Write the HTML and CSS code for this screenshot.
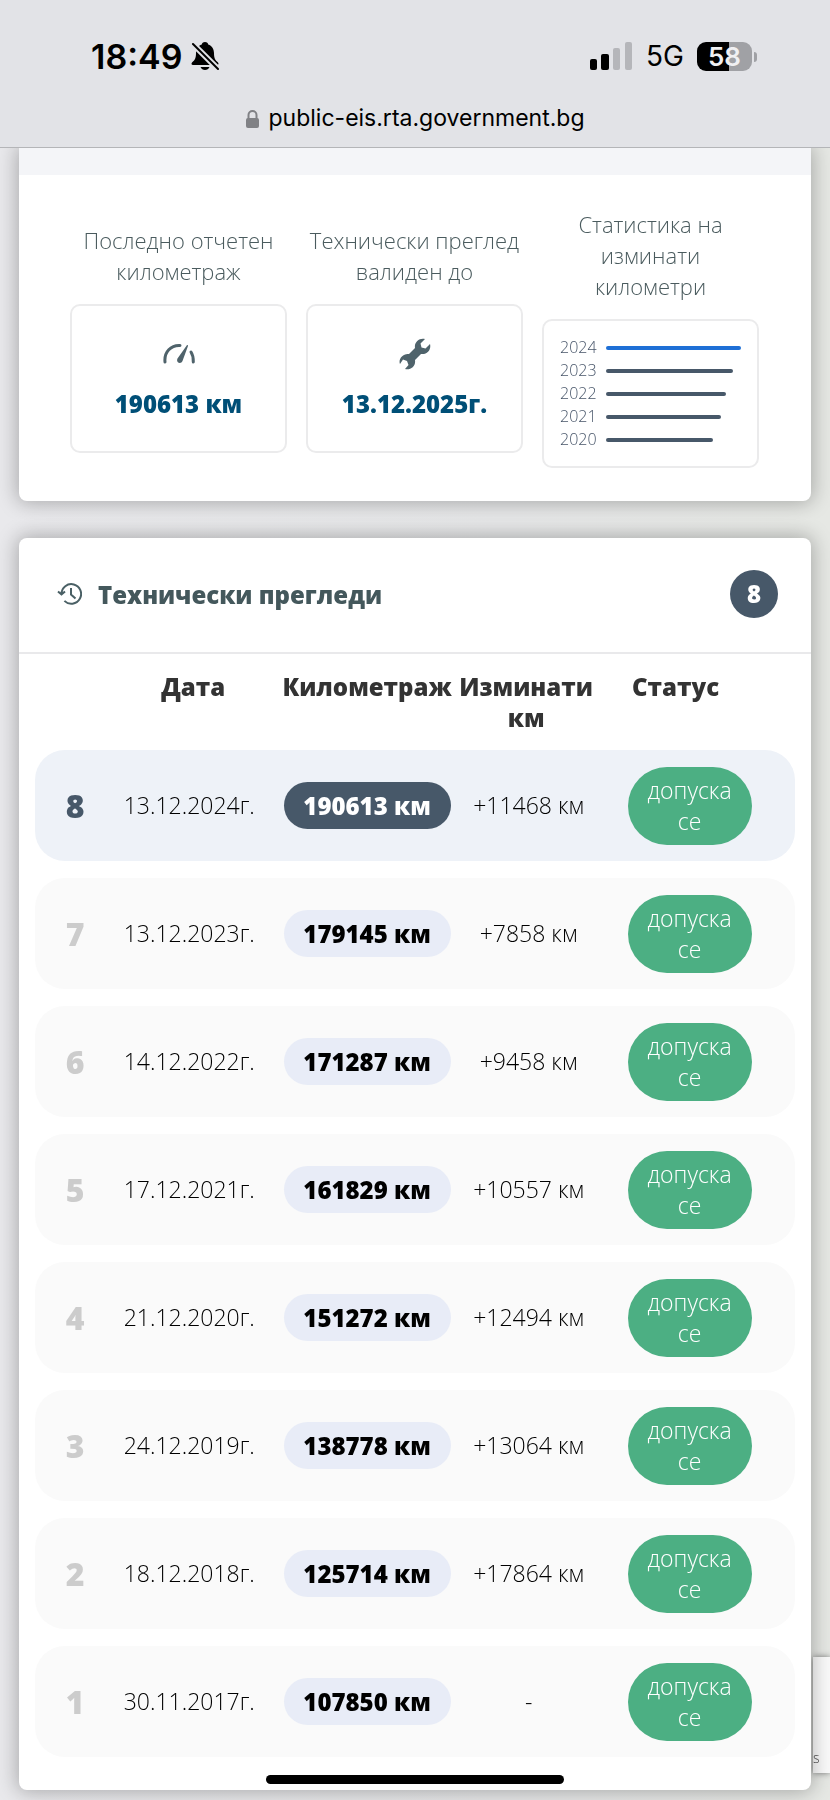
FILE: index.html
```html
<!DOCTYPE html>
<html lang="bg">
<head>
<meta charset="utf-8">
<meta name="viewport" content="width=device-width, initial-scale=1">
<title>Технически прегледи</title>
<link rel="stylesheet" href="styles.css">
</head>
<body>
<header class="browser">
  <div class="status">
    <div class="status-left">
      <span class="clock">18:49</span>
      <svg class="bell" width="28" height="30" viewBox="0 0 28 30" aria-hidden="true">
        <path d="M14 1c2 0 3 1 3.200 2.400C21 4.600 23 8 23 12c0 5 1 7 4 9.500 1 1.200.5 2.500-1 2.500H2c-1.500 0-2-1.300-1-2.500C4 19 5 17 5 12c0-4 2-7.400 5.800-8.600C11 2 12 1 14 1z"/>
        <path d="M9.500 26h9c-.8 2-2.500 3-4.500 3s-3.700-1-4.500-3z"/>
        <path class="bell-gap" d="M2 3l25 25"/>
        <path class="bell-slash" d="M2 3l25 25"/>
      </svg>
    </div>
    <div class="status-right">
      <svg width="42" height="28" viewBox="0 0 42 28" aria-hidden="true">
        <rect x="0" y="17" width="7" height="11" rx="2"/>
        <rect x="11" y="12" width="8" height="16" rx="2"/>
        <rect class="off" x="23" y="6" width="7" height="22" rx="2"/>
        <rect class="off" x="35" y="0" width="7" height="28" rx="2"/>
      </svg>
      <span class="network">5G</span>
      <span class="battery"><span class="battery-level">58</span></span>
    </div>
  </div>
  <div class="address">
    <svg width="13" height="18" viewBox="0 0 13 18" aria-hidden="true">
      <rect x="0" y="8" width="13" height="10" rx="2"/>
      <path d="M2.500 9V5a4 4 0 0 1 8 0v4"/>
    </svg>
    <span>public-eis.rta.government.bg</span>
  </div>
</header>

<main class="page">
  <section class="card summary">
    <div class="strip"></div>
    <div class="stats">
      <div class="stat">
        <h2 class="stat-label">Последно отчетен километраж</h2>
        <div class="box">
          <svg width="32" height="32" viewBox="0 0 32 32" aria-hidden="true">
            <path class="stroke" d="M2 24C1 14 8 7 17 7.500"/>
            <path class="stroke" d="M28 14c2 3 2.400 6 2.300 10"/>
            <path d="M24.500 7c.6.200.6.600.4 1.200L19.500 23c-1.200 3.300-6.400 2-5.300-1.800.2-.6.600-1.200 1-1.700L23.700 7.400c.2-.3.400-.5.800-.4z"/>
          </svg>
          <strong>190613 км</strong>
        </div>
      </div>
      <div class="stat">
        <h2 class="stat-label">Технически преглед валиден до</h2>
        <div class="box">
          <svg width="32" height="32" viewBox="0 0 32 32" aria-hidden="true">
            <path d="M26 1l-4.500 4.500 1 4 4 1L31 6c1.500 5.500-3 11-9 10l-6 6c1 6-4.500 10.500-10 9l3.500-4-1.500-4-4-1.500L1 26c-2-5 3-11 9-10l6-6C15 4 20.500-.5 26 1z"/>
          </svg>
          <strong>13.12.2025г.</strong>
        </div>
      </div>
      <div class="stat">
        <h2 class="stat-label narrow">Статистика на изминати километри</h2>
        <div class="box chart">
          <div class="year"><span>2024</span><div class="track"><div class="bar latest" style="width:100%"></div></div></div>
          <div class="year"><span>2023</span><div class="track"><div class="bar" style="width:94%"></div></div></div>
          <div class="year"><span>2022</span><div class="track"><div class="bar" style="width:89%"></div></div></div>
          <div class="year"><span>2021</span><div class="track"><div class="bar" style="width:85%"></div></div></div>
          <div class="year"><span>2020</span><div class="track"><div class="bar" style="width:79%"></div></div></div>
        </div>
      </div>
    </div>
  </section>

  <section class="card">
    <div class="card-head">
      <svg width="25" height="22" viewBox="0 0 25 22" aria-hidden="true">
        <path d="M4.500 11a9.800 9.800 0 1 1 2.900 6.900M1 8.500l3.500 3 3.500-3M14 5v6.500l4.500 4"/>
      </svg>
      <h1>Технически прегледи</h1>
      <span class="count">8</span>
    </div>
    <table class="history">
      <colgroup><col class="c-num"><col class="c-date"><col class="c-km"><col class="c-diff"><col class="c-status"></colgroup>
      <thead>
        <tr><td></td><th>Дата</th><th>Километраж</th><th>Изминати км</th><th>Статус</th></tr>
      </thead>
      <tbody>
        <tr class="current"><td>8</td><td>13.12.2024г.</td><td><span class="km">190613 км</span></td><td>+11468 км</td><td><span class="pass">допуска се</span></td></tr>
        <tr><td>7</td><td>13.12.2023г.</td><td><span class="km">179145 км</span></td><td>+7858 км</td><td><span class="pass">допуска се</span></td></tr>
        <tr><td>6</td><td>14.12.2022г.</td><td><span class="km">171287 км</span></td><td>+9458 км</td><td><span class="pass">допуска се</span></td></tr>
        <tr><td>5</td><td>17.12.2021г.</td><td><span class="km">161829 км</span></td><td>+10557 км</td><td><span class="pass">допуска се</span></td></tr>
        <tr><td>4</td><td>21.12.2020г.</td><td><span class="km">151272 км</span></td><td>+12494 км</td><td><span class="pass">допуска се</span></td></tr>
        <tr><td>3</td><td>24.12.2019г.</td><td><span class="km">138778 км</span></td><td>+13064 км</td><td><span class="pass">допуска се</span></td></tr>
        <tr><td>2</td><td>18.12.2018г.</td><td><span class="km">125714 км</span></td><td>+17864 км</td><td><span class="pass">допуска се</span></td></tr>
        <tr><td>1</td><td>30.11.2017г.</td><td><span class="km">107850 км</span></td><td>-</td><td><span class="pass">допуска се</span></td></tr>
      </tbody>
    </table>
  </section>
</main>
<aside class="captcha">s</aside>
<div class="home-bar"></div>
</body>
</html>
```
FILE: styles.css
```css
* { box-sizing: border-box; }

body {
  margin: 0;
  background: linear-gradient(90deg, #e9e9ec 0%, #e6e7e8 60%, #e6e8e4 100%);
  color: #000;
  font-family: "Open Sans", "Noto Sans", sans-serif;
  font-size: 22px;
  font-weight: 300;
  line-height: 31px;
}

h1, h2 { margin: 0; font-size: inherit; font-weight: inherit; }
svg { display: block; flex: none; }

.browser {
  position: relative;
  z-index: 2;
  display: flex;
  flex-direction: column;
  gap: 27px;
  height: 148px;
  padding-top: 36px;
  border-bottom: 1px solid #b4b5b8;
  background: #e2e3e7;
  font-family: Inter, sans-serif;
}
.status {
  display: flex;
  justify-content: space-between;
  align-items: center;
  height: 40px;
  padding: 0 78px 0 91px;
}
.status-left, .status-right { display: flex; align-items: center; }
.status-left { gap: 9px; }
.clock { font-size: 34px; font-weight: 600; }
.bell-gap { stroke: #e2e3e7; stroke-width: 6; }
.bell-slash { stroke: #000; stroke-width: 2; stroke-linecap: round; }
.off { fill: #b5b6ba; }
.network { margin: 0 13px 0 14px; font-size: 28px; font-weight: 400; }
.battery {
  position: relative;
  width: 55px;
  height: 29px;
  border-radius: 9px;
  background: linear-gradient(90deg, #000 58%, #a0a1a5 58%);
  color: #f0f0f2;
  font-size: 26px;
  font-weight: 600;
  line-height: 29px;
  text-align: center;
}
.battery::after {
  content: "";
  position: absolute;
  right: -5px;
  top: 10px;
  width: 3px;
  height: 10px;
  border-radius: 0 4px 4px 0;
  background: #a0a1a5;
}
.address {
  display: flex;
  justify-content: center;
  align-items: center;
  gap: 10px;
  font-size: 23px;
  font-weight: 400;
}
.address svg { fill: #808185; }
.address path { fill: none; stroke: #808185; stroke-width: 2; }

.page {
  position: relative;
  z-index: 1;
  display: flex;
  flex-direction: column;
  gap: 37px;
  padding: 0 19px 10px;
}
.card {
  border-radius: 8px;
  background: #fff;
  box-shadow: 0 0 20px 2px rgba(0, 0, 0, .28);
}
.summary { border-radius: 0 0 8px 8px; }
.strip { height: 27px; background: #f4f5f8; }

.stats {
  display: grid;
  grid-template-columns: repeat(3, 1fr);
  align-items: center;
  gap: 19px;
  padding: 34px 52px 33px 51px;
}
.stat { display: flex; flex-direction: column; gap: 17px; }
.stat-label { color: #4a5b5e; text-align: center; }
.narrow { padding: 0 24px; }
.box {
  display: flex;
  flex-direction: column;
  align-items: center;
  justify-content: center;
  gap: 18px;
  height: 149px;
  border: 2px solid #ebebec;
  border-radius: 10px;
}
.box svg { fill: #4f636b; }
.box .stroke { fill: none; stroke: #4f636b; stroke-width: 3; stroke-linecap: round; }
.box strong { color: #004f77; font-size: 24px; font-weight: 800; }
.chart {
  align-items: stretch;
  gap: 0;
  padding: 0 16px;
  color: #475569;
  font-size: 16px;
  line-height: 23px;
}
.year { display: flex; align-items: center; gap: 9px; }
.year span { width: 37px; }
.track { flex: 1; }
.bar { height: 4px; border-radius: 2px; background: #475869; }
.latest { background: #1e6fd6; }

.card-head {
  display: flex;
  align-items: center;
  height: 116px;
  padding: 0 33px 2px 38px;
  border-bottom: 2px solid #e9e9eb;
}
.card-head svg { fill: none; stroke: #4a6065; stroke-width: 2; }
.card-head h1 { margin-left: 16px; color: #44585c; font-size: 24px; font-weight: 800; }
.count {
  margin-left: auto;
  width: 48px;
  height: 48px;
  border-radius: 50%;
  background: #475869;
  color: #fff;
  font-size: 24px;
  font-weight: 800;
  line-height: 48px;
  text-align: center;
}

.history {
  width: 100%;
  padding: 0 16px 16px;
  border-spacing: 0 17px;
  table-layout: fixed;
  font-size: 23px;
  text-align: center;
}
.c-num { width: 9%; }
.c-date { width: 22.6%; }
.c-km { width: 24.2%; }
.c-diff { width: 18.3%; }
.history td, .history th { padding: 0; }
.history th {
  color: #333;
  font-size: 24px;
  font-weight: 800;
  vertical-align: top;
}
.history th:nth-child(2) { padding-left: 8px; }
.history th:nth-child(4) { padding-right: 5px; }
.history th:last-child { padding-right: 42px; }
.history tbody td { height: 111px; background: #fafafa; white-space: nowrap; }
.history tbody td:first-child {
  padding-left: 12px;
  border-radius: 30px 0 0 30px;
  color: #ccc;
  font-size: 32px;
  font-weight: 800;
}
.history tbody td:last-child { padding-right: 14px; border-radius: 0 30px 30px 0; }
.history .current td { background: #eef2f8; }
.history .current td:first-child { color: #475869; }
.km {
  display: inline-block;
  min-width: 167px;
  padding: 8px 16px;
  border-radius: 24px;
  background: #e8ecf7;
  font-size: 24px;
  font-weight: 800;
}
.current .km { background: #475869; color: #fff; }
.pass {
  display: inline-block;
  width: 124px;
  padding: 8px 16px;
  border-radius: 39px;
  background: #4caf83;
  color: #fff;
  white-space: normal;
  vertical-align: middle;
}

.captcha {
  position: fixed;
  right: 0;
  bottom: 27px;
  width: 17px;
  height: 116px;
  padding-top: 86px;
  background: #fafafa;
  box-shadow: 0 0 6px #777;
  color: #444;
  font-size: 14px;
  line-height: 30px;
}
.home-bar {
  position: fixed;
  z-index: 3;
  left: 32%;
  right: 32%;
  bottom: 16px;
  height: 9px;
  border-radius: 5px;
  background: #000;
}
```
